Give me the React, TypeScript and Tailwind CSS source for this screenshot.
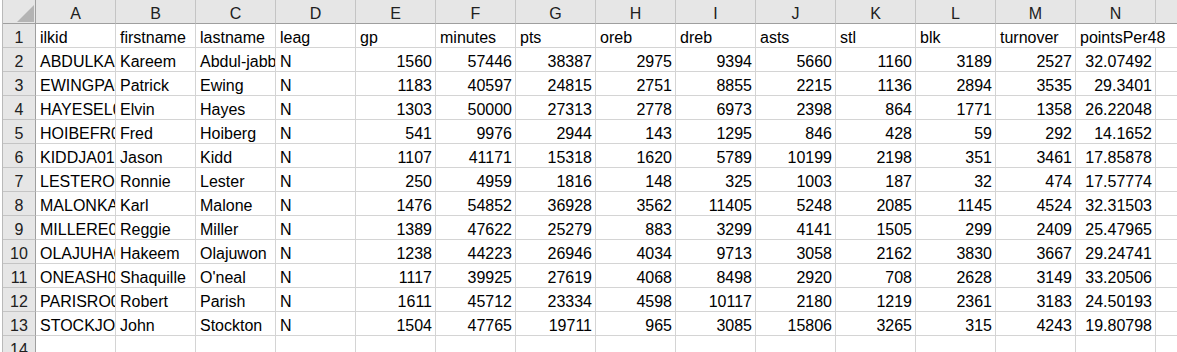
const COLS = ['A', 'B', 'C', 'D', 'E', 'F', 'G', 'H', 'I', 'J', 'K', 'L', 'M', 'N'];

const HEADINGS = [
  'ilkid', 'firstname', 'lastname', 'leag', 'gp', 'minutes', 'pts',
  'oreb', 'dreb', 'asts', 'stl', 'blk', 'turnover', 'pointsPer48',
];

const PLAYERS: string[][] = [
  ['ABDULKA01', 'Kareem', 'Abdul-jabbar', 'N', '1560', '57446', '38387', '2975', '9394', '5660', '1160', '3189', '2527', '32.07492'],
  ['EWINGPA01', 'Patrick', 'Ewing', 'N', '1183', '40597', '24815', '2751', '8855', '2215', '1136', '2894', '3535', '29.3401'],
  ['HAYESEL01', 'Elvin', 'Hayes', 'N', '1303', '50000', '27313', '2778', '6973', '2398', '864', '1771', '1358', '26.22048'],
  ['HOIBEFR01', 'Fred', 'Hoiberg', 'N', '541', '9976', '2944', '143', '1295', '846', '428', '59', '292', '14.1652'],
  ['KIDDJA01', 'Jason', 'Kidd', 'N', '1107', '41171', '15318', '1620', '5789', '10199', '2198', '351', '3461', '17.85878'],
  ['LESTERO01', 'Ronnie', 'Lester', 'N', '250', '4959', '1816', '148', '325', '1003', '187', '32', '474', '17.57774'],
  ['MALONKA01', 'Karl', 'Malone', 'N', '1476', '54852', '36928', '3562', '11405', '5248', '2085', '1145', '4524', '32.31503'],
  ['MILLERE01', 'Reggie', 'Miller', 'N', '1389', '47622', '25279', '883', '3299', '4141', '1505', '299', '2409', '25.47965'],
  ['OLAJUHA01', 'Hakeem', 'Olajuwon', 'N', '1238', '44223', '26946', '4034', '9713', '3058', '2162', '3830', '3667', '29.24741'],
  ['ONEASH01', 'Shaquille', "O'neal", 'N', '1117', '39925', '27619', '4068', '8498', '2920', '708', '2628', '3149', '33.20506'],
  ['PARISRO01', 'Robert', 'Parish', 'N', '1611', '45712', '23334', '4598', '10117', '2180', '1219', '2361', '3183', '24.50193'],
  ['STOCKJO01', 'John', 'Stockton', 'N', '1504', '47765', '19711', '965', '3085', '15806', '3265', '315', '4243', '19.80798'],
];

const isNumber = (v: string) => v !== '' && !isNaN(Number(v));

function Strip() {
  return <div className="h-6 bg-white border-r border-[#b9b9b9]" />;
}

function RowHeader({ n }: { n: number }) {
  return (
    <div className="h-6 flex items-end justify-center leading-[18px] bg-[#e6e6e6] border-r border-r-[#9f9f9f] border-b border-b-[#c4c4c4] text-[#202020]">
      {n}
    </div>
  );
}

function Cell({ value, spill }: { value: string; spill?: boolean }) {
  const num = isNumber(value);
  return (
    <div
      className={
        'h-6 flex items-end leading-[18px] whitespace-nowrap border-b border-[#d4d4d4] ' +
        (spill ? 'overflow-visible pl-[4px]' : 'overflow-hidden border-r ') +
        (num ? 'justify-end pr-[3px]' : ' pl-[4px]')
      }
    >
      {value}
    </div>
  );
}

export default function App() {
  return (
    <div
      className="w-[1177px] h-[352px] overflow-hidden bg-white text-black text-[16px]"
      style={{ fontFamily: '"Liberation Sans", Arial, sans-serif' }}
    >
      <div className="grid grid-cols-[3px_33px_repeat(14,80px)_1fr] grid-rows-[repeat(15,24px)]">
        {/* column letters */}
        <Strip />
        <div className="h-6 relative bg-[#e6e6e6] border-r border-r-[#9f9f9f] border-b border-b-[#9f9f9f]">
          <svg className="absolute left-[14px] top-[5px]" width="17" height="17" viewBox="0 0 17 17">
            <polygon points="17,0 17,17 0,17" fill="#b4b4b4" />
          </svg>
        </div>
        {COLS.map((c) => (
          <div
            key={c}
            className="h-6 flex items-end justify-center leading-[18px] bg-[#e6e6e6] border-r border-r-[#c4c4c4] border-b border-b-[#9f9f9f] text-[#202020]"
          >
            {c}
          </div>
        ))}
        <div className="h-6 bg-[#e6e6e6] border-b border-b-[#9f9f9f]" />

        {/* row 1: headings */}
        <Strip />
        <RowHeader n={1} />
        {HEADINGS.map((h, i) => (
          <Cell key={h} value={h} spill={i === HEADINGS.length - 1} />
        ))}
        <div className="h-6 border-b border-[#d4d4d4]" />

        {PLAYERS.map((row, r) => (
          <div key={row[0]} className="contents">
            <Strip />
            <RowHeader n={r + 2} />
            {row.map((v, i) => (
              <Cell key={i} value={v} />
            ))}
            <div className="h-6 border-b border-[#d4d4d4]" />
          </div>
        ))}

        {/* row 14: empty */}
        <Strip />
        <RowHeader n={14} />
        {COLS.map((c) => (
          <div key={c} className="h-6 border-r border-b border-[#d4d4d4]" />
        ))}
        <div className="h-6 border-b border-[#d4d4d4]" />
      </div>
    </div>
  );
}
